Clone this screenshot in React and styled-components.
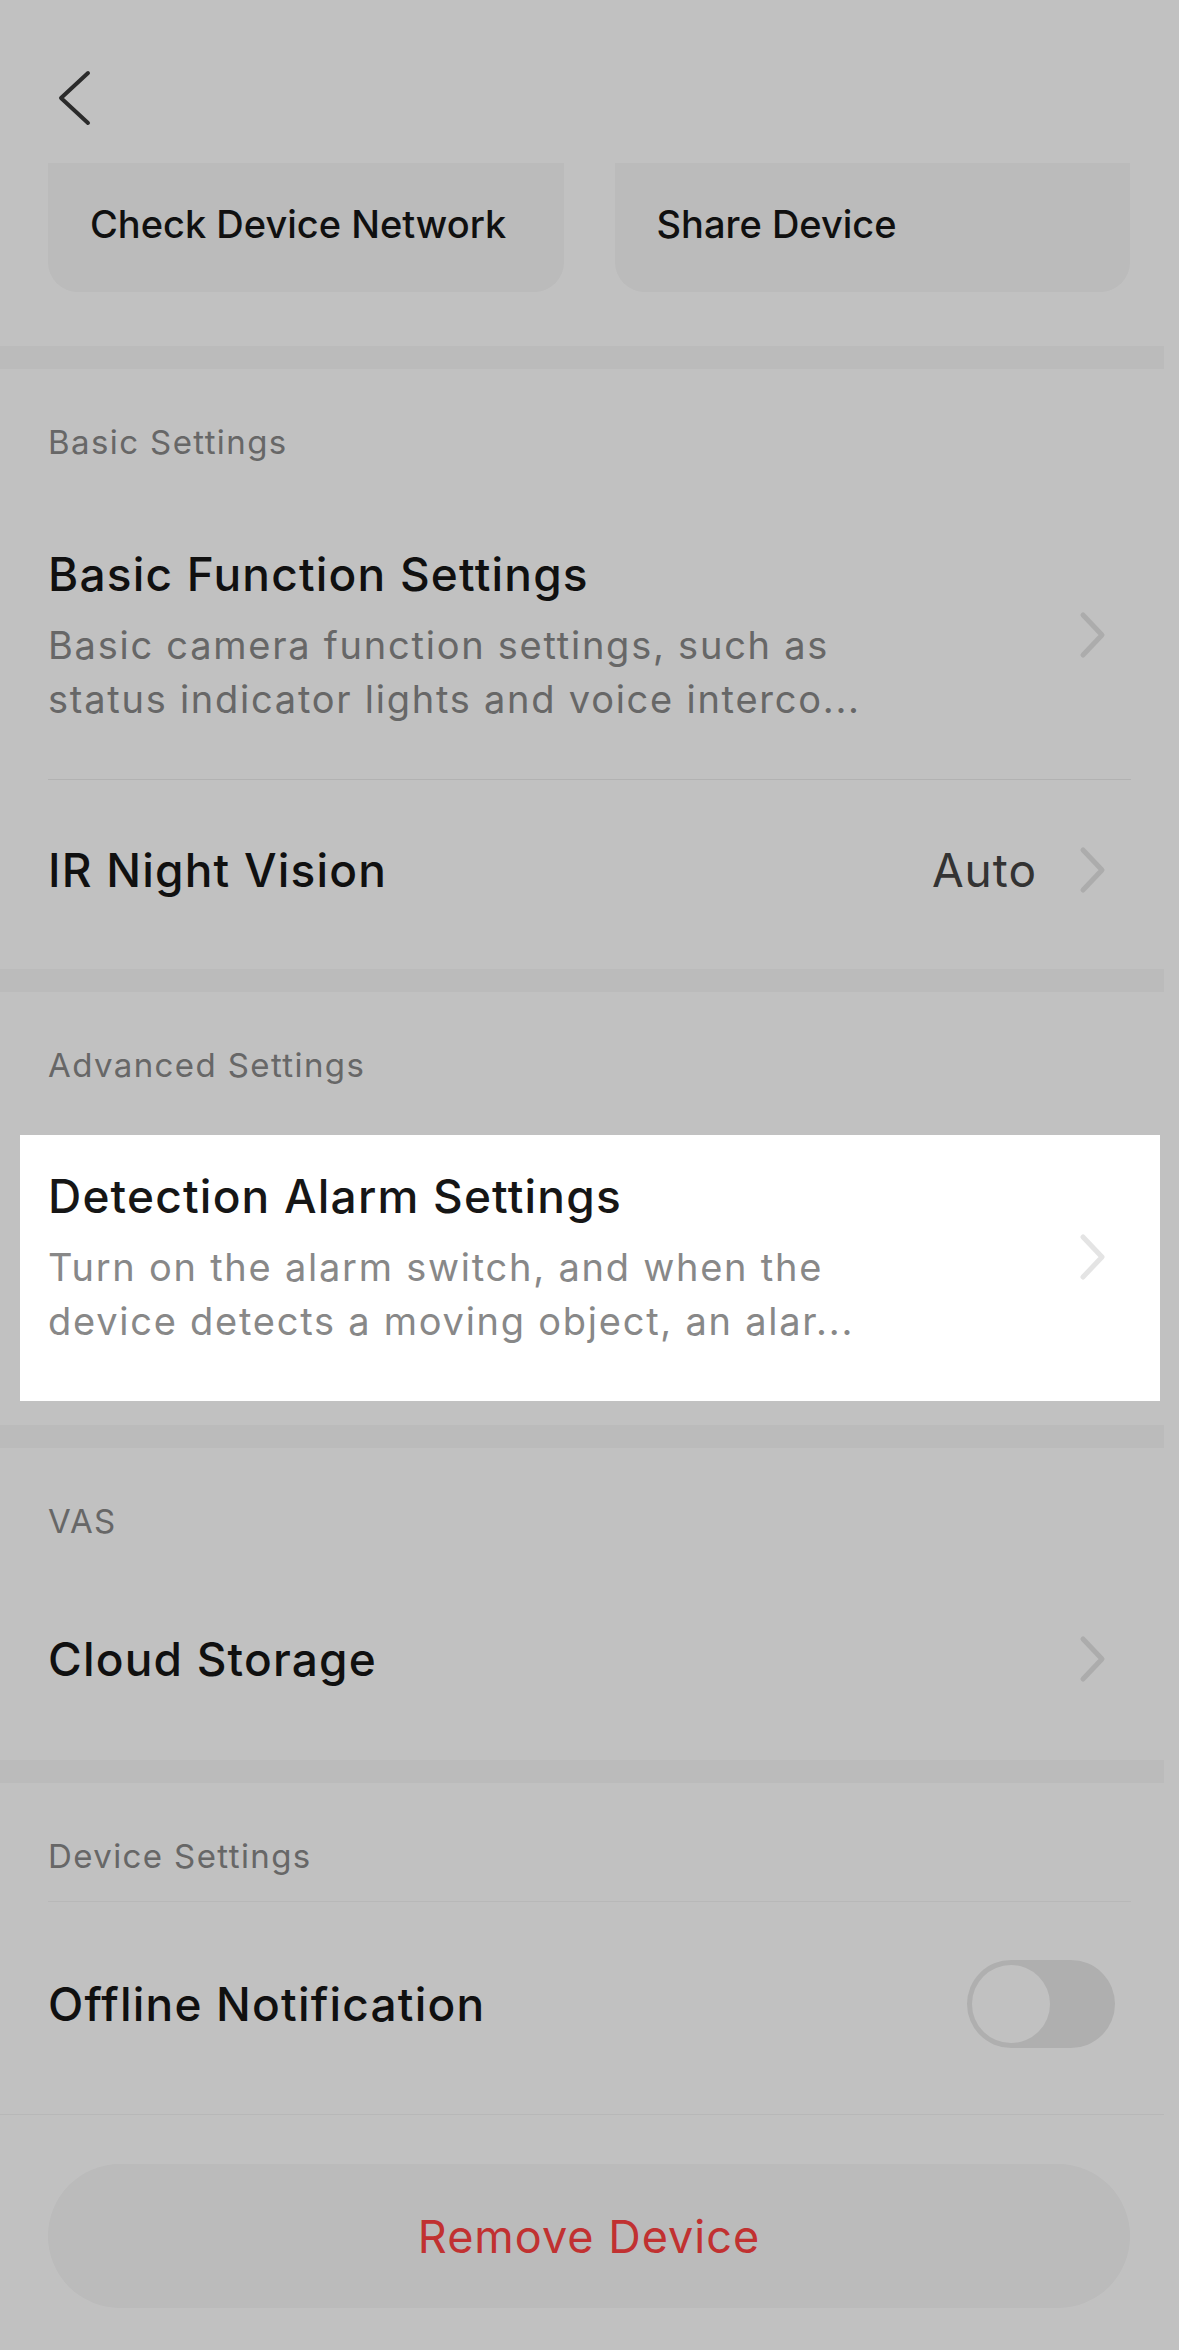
import styled, { createGlobalStyle } from "styled-components";

const GlobalStyle = createGlobalStyle`
  html, body {
    margin: 0;
    padding: 0;
    background: #ffffff;
  }
  body {
    font-family: Inter, "Noto Sans", sans-serif;
    color: #161616;
    -webkit-font-smoothing: antialiased;
  }
  * {
    box-sizing: border-box;
  }
`;

const Page = styled.div`
  width: 1179px;
  min-height: 2350px;
  background: #ffffff;
  padding-bottom: 42px;
`;

const Header = styled.header`
  height: 163px;
  padding: 70px 0 0 58px;
`;

const BackButton = styled.button`
  display: block;
  padding: 0;
  border: 0;
  background: none;
  color: #3a3a3a;
`;

const QuickActions = styled.div`
  display: grid;
  grid-template-columns: 1fr 1fr;
  gap: 51px;
  padding: 0 49px 0 48px;
`;

const QuickButton = styled.button`
  height: 129px;
  padding: 0 0 7px 42px;
  border: 0;
  border-radius: 0 0 30px 30px;
  background: #f7f7f7;
  color: #161616;
  font-family: inherit;
  font-size: 38px;
  font-weight: 500;
  text-align: left;
`;

const Band = styled.div`
  height: 23px;
  margin: ${(p) => p.$top || 0}px 15px 0 0;
  background: #f7f7f7;
`;

const Section = styled.section`
  padding-bottom: ${(p) => p.$bottom || 0}px;
`;

const SectionLabel = styled.div`
  padding: 51px 48px ${(p) => p.$bottom || 26}px;
  font-size: 33px;
  line-height: 44px;
  letter-spacing: 1.4px;
  color: #888888;
`;

const Row = styled.div`
  display: flex;
  align-items: center;
  min-height: ${(p) => p.$height || 0}px;
  margin: 0 48px;
  padding: ${(p) => p.$pad || "0"};
  padding-right: 24px;
  border-top: ${(p) => (p.$divider ? `1px solid ${p.$divider}` : "0")};

  ${(p) =>
    p.$highlight &&
    `
    position: relative;
    z-index: 1;
    margin: 22px 19px 0 20px;
    padding-left: 28px;
    padding-right: 53px;
    background: #ffffff;
    box-shadow: 0 0 0 3000px rgba(0, 0, 0, 0.245);
  `}
`;

const TextCol = styled.div`
  flex: 1;
  min-width: 0;
`;

const Title = styled.div`
  font-size: 46px;
  font-weight: 500;
  line-height: 60px;
  letter-spacing: 1.2px;
  color: #161616;
`;

const Desc = styled.div`
  max-width: 870px;
  margin-top: 14px;
  font-size: 38px;
  line-height: 54px;
  letter-spacing: 1.75px;
  color: #888888;
`;

const Value = styled.span`
  margin-right: 42px;
  font-size: 46px;
  letter-spacing: 1px;
  color: #444444;
`;

const Chevron = styled.svg`
  flex: none;
  color: #e4e4e4;
`;

const Toggle = styled.button`
  display: flex;
  align-items: center;
  width: 148px;
  height: 88px;
  margin-right: -8px;
  padding: 0 5px;
  border: 0;
  border-radius: 44px;
  background: #e8e8e8;
`;

const Knob = styled.span`
  width: 78px;
  height: 78px;
  border-radius: 50%;
  background: #ffffff;
`;

const Rule = styled.div`
  height: 1px;
  margin-right: 15px;
  background: #f3f3f3;
`;

const RemoveButton = styled.button`
  display: block;
  width: 1082px;
  height: 144px;
  margin: 49px 0 0 48px;
  border: 0;
  border-radius: 72px;
  background: #f7f7f7;
  color: #ff4141;
  font-family: inherit;
  font-size: 45px;
  letter-spacing: 1px;
`;

function Arrow() {
  return (
    <Chevron width="28" height="48" viewBox="0 0 28 48">
      <path
        d="M4 4 L23 24 L4 44"
        fill="none"
        stroke="currentColor"
        strokeWidth="5"
        strokeLinecap="round"
        strokeLinejoin="round"
      />
    </Chevron>
  );
}

function App() {
  return (
    <>
      <GlobalStyle />
      <Page>
        <Header>
          <BackButton aria-label="Back">
            <svg width="34" height="56" viewBox="0 0 34 56">
              <path
                d="M30 3 L3 28 L30 53"
                fill="none"
                stroke="currentColor"
                strokeWidth="4"
                strokeLinecap="round"
                strokeLinejoin="round"
              />
            </svg>
          </BackButton>
        </Header>

        <QuickActions>
          <QuickButton>Check Device Network</QuickButton>
          <QuickButton>Share Device</QuickButton>
        </QuickActions>

        <Band $top={54} />
        <Section $bottom={9}>
          <SectionLabel>Basic Settings</SectionLabel>
          <Row $pad="54px 0 53px">
            <TextCol>
              <Title>Basic Function Settings</Title>
              <Desc>
                Basic camera function settings, such as status indicator lights
                and voice interco...
              </Desc>
            </TextCol>
            <Arrow />
          </Row>
          <Row $height={181} $divider="#ececec">
            <TextCol>
              <Title>IR Night Vision</Title>
            </TextCol>
            <Value>Auto</Value>
            <Arrow />
          </Row>
        </Section>

        <Band />
        <Section $bottom={24}>
          <SectionLabel>Advanced Settings</SectionLabel>
          <Row $highlight $pad="31px 0 53px">
            <TextCol>
              <Title>Detection Alarm Settings</Title>
              <Desc>
                Turn on the alarm switch, and when the device detects a moving
                object, an alar...
              </Desc>
            </TextCol>
            <Arrow />
          </Row>
        </Section>

        <Band />
        <Section $bottom={11}>
          <SectionLabel>VAS</SectionLabel>
          <Row $height={180}>
            <TextCol>
              <Title>Cloud Storage</Title>
            </TextCol>
            <Arrow />
          </Row>
        </Section>

        <Band />
        <Section $bottom={8}>
          <SectionLabel $bottom={23}>Device Settings</SectionLabel>
          <Row $height={205} $divider="#f3f3f3">
            <TextCol>
              <Title>Offline Notification</Title>
            </TextCol>
            <Toggle aria-label="Offline Notification">
              <Knob />
            </Toggle>
          </Row>
        </Section>
        <Rule />

        <RemoveButton>Remove Device</RemoveButton>
      </Page>
    </>
  );
}

export default App;
